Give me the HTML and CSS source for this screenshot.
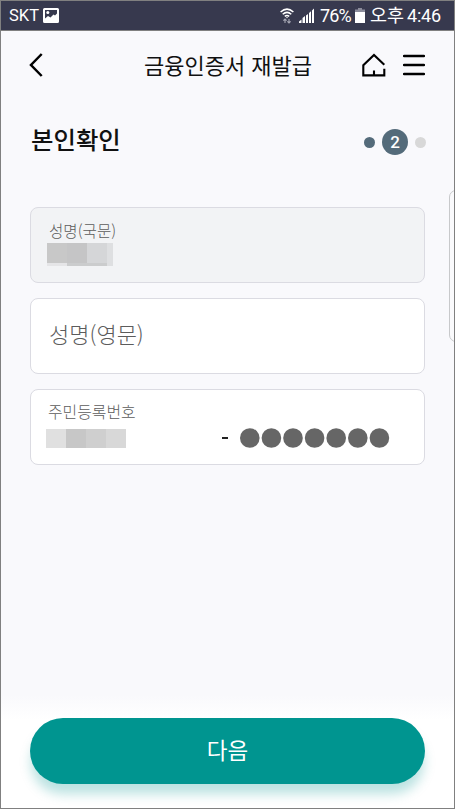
FILE: index.html
```html
<!DOCTYPE html>
<html lang="ko">
<head>
<meta charset="utf-8">
<meta name="viewport" content="width=device-width">
<title>금융인증서 재발급</title>
<link rel="stylesheet" href="styles.css">
</head>
<body>
<div class="screen">
  <div class="status">
    <span class="carrier">SKT</span>
    <svg class="picture" width="16" height="15" viewBox="0 0 16 15"><path fill="#fff" fill-rule="evenodd" d="M1.500 0h13Q16 0 16 1.500v12q0 1.500-1.500 1.500h-13Q0 15 0 13.500v-12Q0 0 1.500 0ZM2 2v8.500l3-2.500 2.500 1.500 3-3 1.500 1 2-2V2Z"/><circle cx="4.800" cy="4.600" r="1.500" fill="#fff"/></svg>
    <svg class="wifi" width="14" height="16" viewBox="0 0 14 16" fill="none" stroke="#fff" stroke-width="1.500"><path d="M.6 4Q7-1.800 13.400 4M2.700 6.300Q7 2.500 11.300 6.300M4.800 8.400Q7 6.500 9.200 8.400"/><circle cx="7" cy="9.500" r=".7" fill="#fff" stroke="none"/><path stroke="#a8a9b5" stroke-width="1.100" d="M5 15v-4M3.400 12.700 5 11l1.600 1.700M9 11v4M7.400 13.300 9 15l1.600-1.700"/></svg>
    <svg class="signal" width="16" height="15" viewBox="0 0 16 15" fill="#fff"><path d="M0 15v-1.500L2.500 11.500V15ZM3.500 15v-5l2.500-2V15ZM7 15V7.500L9 6v9ZM10 15V5l2-1.700V15ZM13 15V2.500L15 .5V15Z"/></svg>
    <span class="percent">76%</span>
    <svg class="battery" width="10" height="15" viewBox="0 0 10 15"><path fill="#8b8c9b" d="M3 0h4v1.500h3V5H0V1.500h3Z"/><path fill="#fff" d="M0 4h10v11H0Z"/></svg>
    <span class="ampm">오후</span>
    <span class="clock">4:46</span>
  </div>
  <header class="header">
    <svg class="back" width="16" height="26" viewBox="0 0 16 26"><path d="M13.700 2 3 13 13.700 24" fill="none" stroke="#000" stroke-width="2.500"/></svg>
    <h1 class="title">금융인증서 재발급</h1>
    <svg class="home" width="24" height="24" viewBox="0 0 24 24"><path d="M22.300 11.800 12 2 1.300 12.200V22.400H22.300V15.700M12 22V17.500" fill="none" stroke="#000" stroke-width="2.100"/></svg>
    <svg class="menu" width="22" height="22" viewBox="0 0 22 22"><path d="M1 2H21M1 11H21M1 20H21" stroke="#000" stroke-width="2.300" stroke-linecap="round"/></svg>
  </header>
  <div class="heading">
    <h2 class="subject">본인확인</h2>
    <div class="steps"><i class="dot done"></i><b class="current">2</b><i class="dot"></i></div>
  </div>
  <main class="form">
    <section class="field locked">
      <span class="label korean">성명(국문)</span>
      <svg class="mask" width="66" height="23" viewBox="0 0 66 23" shape-rendering="crispEdges"><path fill="#e5e5e7" d="M0 0h66v23H0Z"/><path fill="#c8c8c8" d="M0 0h20v20H0Z"/><path fill="#c5c5c6" d="M20 0h20v20H20Z"/><path fill="#d5d6d8" d="M40 0h20v20H40Z"/><path fill="#dedfe1" d="M60 0h6v23h-6Z"/><path fill="#cbcccd" d="M20 20h40v3H20Z"/></svg>
    </section>
    <section class="field empty"><span class="placeholder">성명(영문)</span></section>
    <section class="field resident">
      <span class="label">주민등록번호</span>
      <div class="number">
        <svg width="80" height="19" viewBox="0 0 80 19" shape-rendering="crispEdges"><path fill="#e0e0e0" d="M0 0h20v19H0Z"/><path fill="#c7c7c7" d="M20 0h20v19H20Z"/><path fill="#cfcfcf" d="M40 0h20v19H40Z"/><path fill="#d8d8d8" d="M60 0h20v19H60Z"/></svg>
        <i class="dash"></i>
        <svg class="secret" width="151" height="20" viewBox="0 0 151 20" fill="#666"><circle cx="9.800" cy="10" r="9.800"/><circle cx="31.400" cy="10" r="9.800"/><circle cx="53" cy="10" r="9.800"/><circle cx="74.600" cy="10" r="9.800"/><circle cx="96.200" cy="10" r="9.800"/><circle cx="117.800" cy="10" r="9.800"/><circle cx="139.400" cy="10" r="9.800"/></svg>
      </div>
    </section>
  </main>
  <footer class="footer"><button class="next">다음</button></footer>
  <div class="drawer"></div>
</div>
</body>
</html>
```
FILE: styles.css
```css
* { box-sizing: border-box; }
body { margin: 0; font-family: "Noto Sans CJK KR", sans-serif; color: #111; }
.screen { position: relative; width: 455px; height: 809px; border: 1px solid #808080; background: #f9f9fc; overflow: hidden; display: flex; flex-direction: column; }
.status { height: 30px; flex: none; background: #37394e; border-bottom: 1px solid #808080; display: flex; align-items: center; color: #fff; font-family: Roboto, "Noto Sans CJK KR", sans-serif; font-size: 18px; line-height: 28px; white-space: nowrap; }
.carrier { width: 34px; margin-left: 8px; font-size: 16.500px; }
.wifi { margin-left: 221px; }
.signal { margin-left: 5px; }
.percent { width: 35px; margin-left: 5px; font-size: 18px; letter-spacing: -.9px; }
.ampm { width: 37px; margin-left: 5px; font-size: 18.500px; padding-top: 1px; }
.clock { font-size: 18px; letter-spacing: -.2px; }
.header { height: 68px; flex: none; display: flex; align-items: center; }
.back { margin-left: 27px; }
.title { width: 218px; margin: 0 0 2px 100px; font-size: 22px; font-weight: 400; line-height: 32px; white-space: nowrap; }
.menu { margin-left: 17px; }
.heading { height: 84px; flex: none; padding: 0 28px 0 30px; display: flex; justify-content: space-between; }
.subject { margin: 22px 0 0; font-size: 24.400px; font-weight: 500; line-height: 36px; }
.steps { height: 26px; margin-top: 30px; display: flex; align-items: center; gap: 7px; }
.dot { width: 11px; height: 11px; border-radius: 50%; background: #d8d8d8; }
.done { background: #546b7a; }
.current { width: 26px; height: 26px; border-radius: 50%; background: #546b7a; color: #fff; font: 500 17px/26px Roboto, sans-serif; text-align: center; }
.form { margin: 24px 29px 0 29px; display: flex; flex-direction: column; gap: 15px; }
.field { height: 76px; border: 1px solid #dbdbe2; border-radius: 8px; background: #fff; display: flex; flex-direction: column; padding-left: 17px; color: #5c5c5c; font-weight: 300; }
.locked { background: #f2f3f5; }
.label { height: 24px; margin-top: 10px; font-size: 15.900px; line-height: 24px; }
.korean { margin-left: 1px; font-size: 15.600px; }
.mask { margin: 1px 0 0 -1px; }
.placeholder { margin-left: 1px; font-size: 22px; line-height: 68px; }
.number { display: flex; align-items: center; margin: 4px 0 0 -2px; }
.dash { width: 6px; height: 2px; margin-left: 96px; background: #222; }
.secret { margin-left: 12px; }
.footer { margin-top: auto; height: 113px; flex: none; padding: 23px 29px 0; background: linear-gradient(#f9f9fc, #fff 25px); }
.next { display: block; width: 100%; height: 66px; padding: 0 0 3px; border: 0; border-radius: 33px; background: #009590; box-shadow: 0 11px 12px -1px rgba(0, 149, 144, .27); color: #fff; font: 400 22.500px/63px "Noto Sans CJK KR", sans-serif; }
.drawer { position: absolute; left: 448px; top: 189px; width: 20px; height: 152px; border: 1px solid #c8c9cb; border-radius: 7px; background: #fafafc; }
```
